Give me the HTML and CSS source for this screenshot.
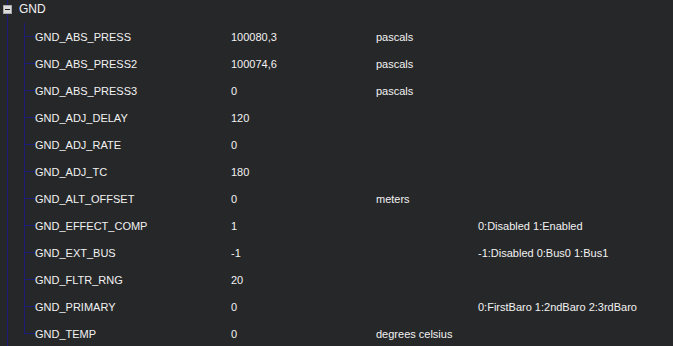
FILE: index.html
```html
<!DOCTYPE html>
<html lang="en">
<head>
    <meta charset="UTF-8">
    <title>GND params</title>
    <link rel="stylesheet" href="styles.css">
</head>
<body>
    <div class="tree">
        <div class="node-head">
            <span class="toggle"><span class="minus"></span></span>
            <span class="node-name">GND</span>
        </div>
        <ul class="params">
            <li class="param"><span>GND_ABS_PRESS</span><span>100080,3</span><span>pascals</span><span></span></li>
            <li class="param"><span>GND_ABS_PRESS2</span><span>100074,6</span><span>pascals</span><span></span></li>
            <li class="param"><span>GND_ABS_PRESS3</span><span>0</span><span>pascals</span><span></span></li>
            <li class="param"><span>GND_ADJ_DELAY</span><span>120</span><span></span><span></span></li>
            <li class="param"><span>GND_ADJ_RATE</span><span>0</span><span></span><span></span></li>
            <li class="param"><span>GND_ADJ_TC</span><span>180</span><span></span><span></span></li>
            <li class="param"><span>GND_ALT_OFFSET</span><span>0</span><span>meters</span><span></span></li>
            <li class="param"><span>GND_EFFECT_COMP</span><span>1</span><span></span><span>0:Disabled 1:Enabled</span></li>
            <li class="param"><span>GND_EXT_BUS</span><span>-1</span><span></span><span>-1:Disabled 0:Bus0 1:Bus1</span></li>
            <li class="param"><span>GND_FLTR_RNG</span><span>20</span><span></span><span></span></li>
            <li class="param"><span>GND_PRIMARY</span><span>0</span><span></span><span>0:FirstBaro 1:2ndBaro 2:3rdBaro</span></li>
            <li class="param"><span>GND_TEMP</span><span>0</span><span>degrees celsius</span><span></span></li>
        </ul>
    </div>
</body>
</html>
```
FILE: styles.css
```css
body {
    margin: 0;
    background-color: #262729;
    color: #f2f2f2;
    font-family: 'Liberation Sans', Arial, sans-serif;
    font-size: 11px;
    overflow: hidden;
}

.tree {
    margin-left: 7px;
    border-left: 1px solid #1e1e7a;
    min-height: 100vh;
}

.node-head {
    display: flex;
    align-items: center;
    height: 18px;
}

.toggle {
    display: flex;
    align-items: center;
    justify-content: center;
    width: 9px;
    height: 9px;
    margin-left: -5px;
    background-color: #dcdcdc;
    box-sizing: border-box;
    border: 1px solid #a8a8a8;
}

.minus {
    width: 5px;
    height: 1px;
    background-color: #222;
}

.node-name {
    margin-left: 7px;
    font-size: 12px;
}

.params {
    list-style: none;
    margin: 5px 0 0 16px;
    padding: 0;
}

.param {
    position: relative;
    display: grid;
    grid-template-columns: 196px 145px 102px 1fr;
    align-items: center;
    height: 27px;
    padding-left: 11px;
}

.param::before {
    content: '';
    position: absolute;
    left: 0;
    top: 0;
    width: 10px;
    height: 13px;
    border-left: 1px solid #1e1e7a;
    border-bottom: 1px solid #1e1e7a;
}

.param::after {
    content: '';
    position: absolute;
    left: 0;
    top: 14px;
    bottom: 0;
    border-left: 1px solid #1e1e7a;
}

.param:last-child::after {
    display: none;
}
```
